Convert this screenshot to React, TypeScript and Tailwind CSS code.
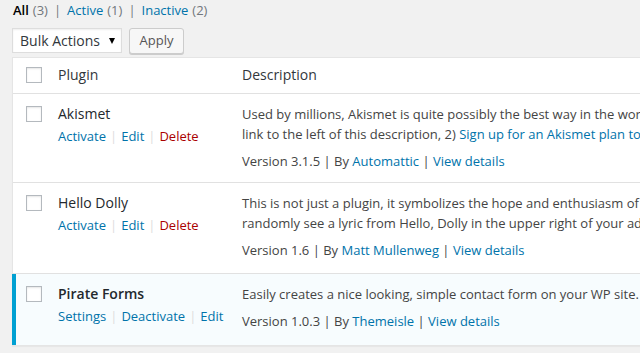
import React from "react";

const Box = () => (
  <span className="block w-4 h-4 border border-[#b4b9be] bg-white shadow-[inset_0_1px_2px_rgba(0,0,0,0.1)]" />
);

const Sep = () => <span className="text-[#ddd] mx-[4px]">|</span>;

type Action = { label: string; red?: boolean };

function Row({
  name,
  active,
  actions,
  lines,
  version,
  author,
  h,
  last,
}: {
  name: string;
  active?: boolean;
  actions: Action[];
  lines: React.ReactNode[];
  version: string;
  author: string;
  h: string;
  last?: boolean;
}) {
  return (
    <div
      className={
        "flex " +
        h +
        (last ? "" : " border-b border-[#e1e1e1]") +
        (active ? " bg-[#f7fcfe] border-l-4 border-l-[#00a0d2] -ml-px" : "")
      }
    >
      <div className={(active ? "w-[32px] pl-[10px]" : "w-[35px] pl-[13px]") + " pt-[12px] shrink-0"}>
        <Box />
      </div>
      <div className="w-[184px] shrink-0 pl-[10px] pt-[10px]">
        <div
          className={
            "text-[14px] leading-[20px] text-[#23282d] " + (active ? "font-semibold" : "font-normal")
          }
        >
          {name}
        </div>
        <div className="pt-[2px] leading-[20px] text-[13px] flex">
          {actions.map((a, i) => (
            <React.Fragment key={a.label}>
              {i > 0 && <Sep />}
              <span className={a.red ? "text-[#a00]" : "text-[#0073aa]"}>{a.label}</span>
            </React.Fragment>
          ))}
        </div>
      </div>
      <div className="flex-1 pl-[10px] pt-[10px] text-[13px] text-[#444] whitespace-nowrap overflow-hidden">
        {lines.map((l, i) => (
          <div key={i} className="leading-[20px]">
            {l}
          </div>
        ))}
        <div className="leading-[20px] mt-[7px]">
          Version {version} | By <span className="text-[#0073aa]">{author}</span> |{" "}
          <span className="text-[#0073aa]">View details</span>
        </div>
      </div>
    </div>
  );
}

export default function App() {
  return (
    <div className="w-[640px] h-[353px] overflow-hidden bg-[#f1f1f1] font-['Open_Sans',sans-serif] text-[13px] text-[#444]">
      <div className="flex items-center h-[20px] leading-[20px] pl-[13px] text-[13px]">
        <span className="text-black font-semibold">All</span>
        <span className="text-[#72777c] ml-[4px]">(3)</span>
        <span className="text-[#72777c] mx-[6px]">|</span>
        <span className="text-[#0073aa]">Active</span>
        <span className="text-[#72777c] ml-[4px]">(1)</span>
        <span className="text-[#72777c] mx-[6px]">|</span>
        <span className="text-[#0073aa]">Inactive</span>
        <span className="text-[#72777c] ml-[4px]">(2)</span>
      </div>
      <div className="flex items-center gap-[7px] pl-[12px] mt-[8px] h-[25px]">
        <div className="w-[110px] h-[25px] bg-white border border-[#ddd] shadow-[inset_0_1px_2px_rgba(0,0,0,0.07)] flex items-center justify-between pl-[7px] pr-[6px] text-[14px] text-[#32373c]">
          <span>Bulk Actions</span>
          <svg width="6" height="6" viewBox="0 0 6 6">
            <path d="M0 0 L6 0 L3 6 Z" fill="#000" />
          </svg>
        </div>
        <div className="w-[55px] h-[26px] bg-[#f7f7f7] border border-[#ccc] rounded-[3px] shadow-[0_1px_0_#ccc] flex items-center justify-center text-[13px] text-[#555]">
          Apply
        </div>
      </div>
      <div className="ml-[12px] mt-[4px] w-[700px] bg-white border border-[#e5e5e5] shadow-[0_1px_1px_rgba(0,0,0,0.04)]">
        <div className="flex h-[36px] border-b border-[#e1e1e1]">
          <div className="w-[35px] pl-[13px] pt-[9px] shrink-0">
            <Box />
          </div>
          <div className="w-[184px] shrink-0 pl-[10px] pt-[7px] leading-[20px] text-[14px] text-[#32373c]">
            Plugin
          </div>
          <div className="flex-1 pl-[10px] pt-[7px] leading-[20px] text-[14px] text-[#32373c]">
            Description
          </div>
        </div>
        <Row
          name="Akismet"
          h="h-[89px]"
          actions={[{ label: "Activate" }, { label: "Edit" }, { label: "Delete", red: true }]}
          lines={[
            <>
              Used by millions, Akismet is quite possibly the best way in the world to{" "}
              <strong>protect your blog from spam</strong>. It keeps your site protected even while you sleep.
            </>,
            <>
              link to the left of this description, 2){" "}
              <span className="text-[#0073aa]">Sign up for an Akismet plan to get an API key</span>, and 3) Go to
              your Akismet configuration page, and save your API key.
            </>,
          ]}
          version="3.1.5"
          author="Automattic"
        />
        <Row
          name="Hello Dolly"
          h="h-[91px]"
          actions={[{ label: "Activate" }, { label: "Edit" }, { label: "Delete", red: true }]}
          lines={[
            <>
              This is not just a plugin, it symbolizes the hope and enthusiasm of an entire generation summed up in
              two words sung most famously by Louis Armstrong.
            </>,
            <>randomly see a lyric from Hello, Dolly in the upper right of your admin screen on every page.</>,
          ]}
          version="1.6"
          author="Matt Mullenweg"
        />
        <Row
          name="Pirate Forms"
          active
          last
          h="h-[71px]"
          actions={[{ label: "Settings" }, { label: "Deactivate" }, { label: "Edit" }]}
          lines={[<>Easily creates a nice looking, simple contact form on your WP site.</>]}
          version="1.0.3"
          author="Themeisle"
        />
      </div>
    </div>
  );
}
